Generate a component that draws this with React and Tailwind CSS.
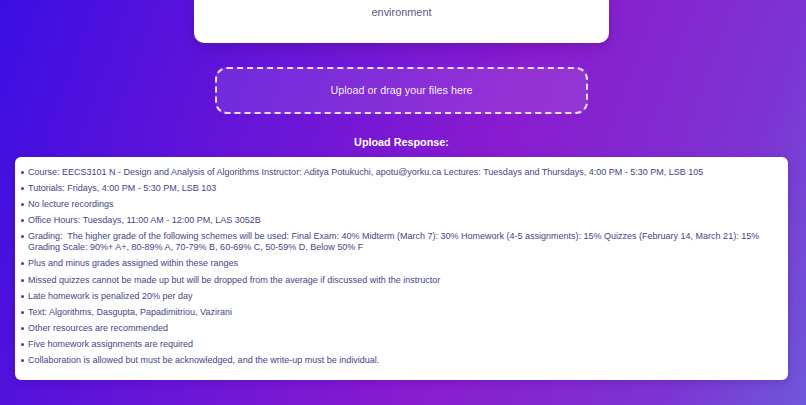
const items = [
  "Course: EECS3101 N - Design and Analysis of Algorithms Instructor: Aditya Potukuchi, apotu@yorku.ca Lectures: Tuesdays and Thursdays, 4:00 PM - 5:30 PM, LSB 105",
  "Tutorials: Fridays, 4:00 PM - 5:30 PM, LSB 103",
  "No lecture recordings",
  "Office Hours: Tuesdays, 11:00 AM - 12:00 PM, LAS 3052B",
  "Grading:\u00a0 The higher grade of the following schemes will be used: Final Exam: 40% Midterm (March 7): 30% Homework (4-5 assignments): 15% Quizzes (February 14, March 21): 15% Grading Scale: 90%+ A+, 80-89% A, 70-79% B, 60-69% C, 50-59% D, Below 50% F",
  "Plus and minus grades assigned within these ranges",
  "Missed quizzes cannot be made up but will be dropped from the average if discussed with the instructor",
  "Late homework is penalized 20% per day",
  "Text: Algorithms, Dasgupta, Papadimitriou, Vazirani",
  "Other resources are recommended",
  "Five homework assignments are required",
  "Collaboration is allowed but must be acknowledged, and the write-up must be individual.",
];

export default function App() {
  return (
    <div className="min-h-screen w-full overflow-hidden bg-[linear-gradient(110deg,#3a0ee2_0%,#5612dc_18%,#8a1bd0_58%,#7d34d2_85%,#6e58da_100%)] font-['Liberation_Sans',Arial,sans-serif]">
      <div className="flex flex-col items-center pr-[3px]">
        <div className="w-[415px] bg-white rounded-b-[10px] shadow-[0_4px_12px_rgba(40,0,90,0.25)] pt-[4px] pb-[23px] text-center">
          <p className="text-[10.9px] leading-[16px] text-[#585888]">environment</p>
        </div>

        <div className="mt-[24px] w-[373px] h-[47px] rounded-[12px] border-2 border-dashed border-white/85 bg-white/10 flex items-center justify-center">
          <span className="text-[10.8px] text-white/95">Upload or drag your files here</span>
        </div>

        <h2 className="mt-[21px] text-[10.8px] leading-[14px] font-bold text-white">Upload Response:</h2>

        <div className="mt-[8px] mb-[26px] w-[773px] bg-white rounded-[6px] shadow-[0_2px_8px_rgba(40,0,90,0.2)] pl-[6px] pr-[8px] pt-[10px] pb-[14px]">
          <ul className="flex flex-col gap-[5.1px] text-[9px] leading-[11px] text-[#463f86]">
            {items.map((t, i) => (
              <li key={i} className="flex gap-[4px]">
                <span className="mt-[4px] w-[3px] h-[3px] shrink-0 rounded-full bg-[#463f86]" />
                <span>{t}</span>
              </li>
            ))}
          </ul>
        </div>
      </div>
    </div>
  );
}
